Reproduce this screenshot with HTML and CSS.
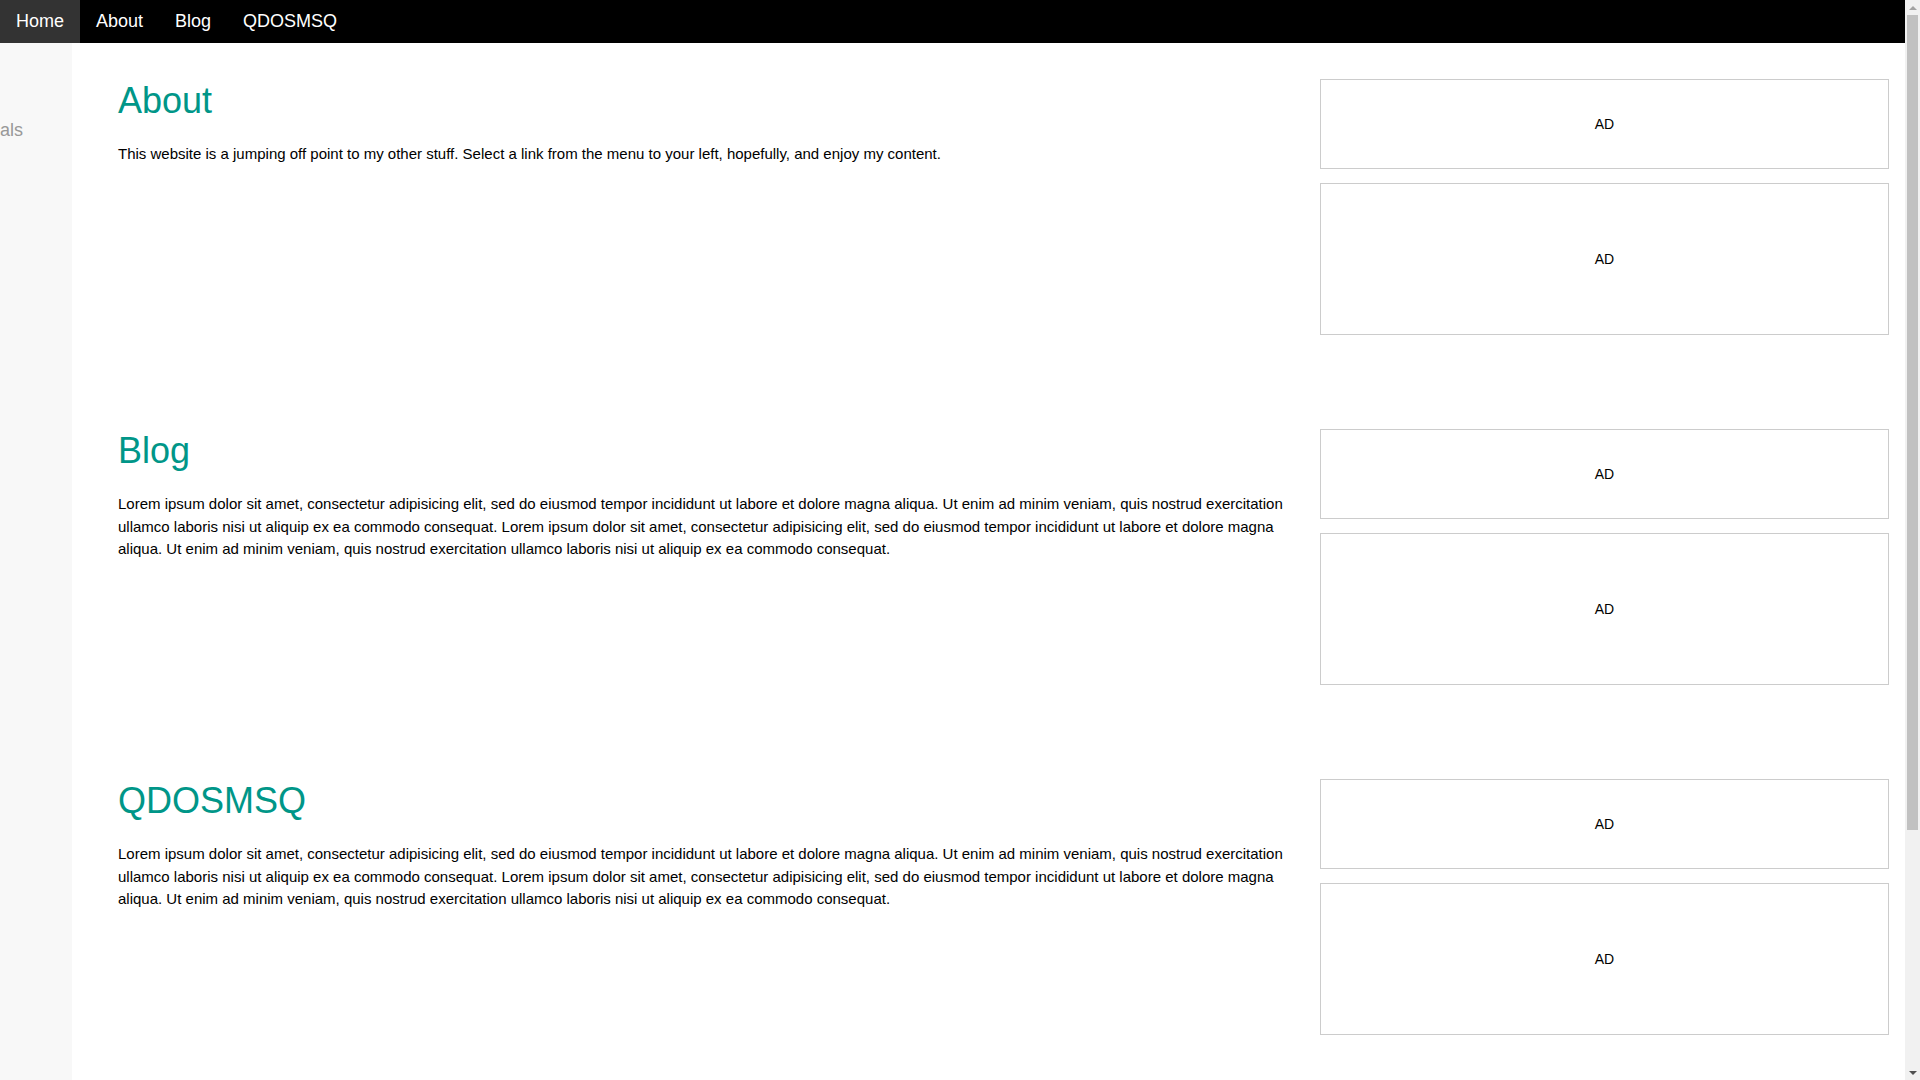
FILE: index.html
```html
<!DOCTYPE html>
<html lang="en">
<head>
<meta charset="utf-8">
<title>Home</title>
<link rel="stylesheet" href="styles.css">
</head>
<body>
<nav class="topnav">
  <a class="nav-link active" href="#">Home</a>
  <a class="nav-link" href="#about">About</a>
  <a class="nav-link" href="#blog">Blog</a>
  <a class="nav-link" href="#qdosmsq">QDOSMSQ</a>
</nav>
<div class="layout">
  <aside class="sidebar">
    <span class="side-text">als</span>
  </aside>
  <main class="main">
    <section class="section" id="about">
      <div class="text-col">
        <h1 class="title">About</h1>
        <p class="body-text">This website is a jumping off point to my other stuff. Select a link from the menu to your left, hopefully, and enjoy my content.</p>
      </div>
      <div class="ad-col">
        <div class="ad ad-short">AD</div>
        <div class="ad ad-tall">AD</div>
      </div>
    </section>
    <section class="section" id="blog">
      <div class="text-col">
        <h1 class="title">Blog</h1>
        <p class="body-text">Lorem ipsum dolor sit amet, consectetur adipisicing elit, sed do eiusmod tempor incididunt ut labore et dolore magna aliqua. Ut enim ad minim veniam, quis nostrud exercitation ullamco laboris nisi ut aliquip ex ea commodo consequat. Lorem ipsum dolor sit amet, consectetur adipisicing elit, sed do eiusmod tempor incididunt ut labore et dolore magna aliqua. Ut enim ad minim veniam, quis nostrud exercitation ullamco laboris nisi ut aliquip ex ea commodo consequat.</p>
      </div>
      <div class="ad-col">
        <div class="ad ad-short">AD</div>
        <div class="ad ad-tall">AD</div>
      </div>
    </section>
    <section class="section" id="qdosmsq">
      <div class="text-col">
        <h1 class="title">QDOSMSQ</h1>
        <p class="body-text">Lorem ipsum dolor sit amet, consectetur adipisicing elit, sed do eiusmod tempor incididunt ut labore et dolore magna aliqua. Ut enim ad minim veniam, quis nostrud exercitation ullamco laboris nisi ut aliquip ex ea commodo consequat. Lorem ipsum dolor sit amet, consectetur adipisicing elit, sed do eiusmod tempor incididunt ut labore et dolore magna aliqua. Ut enim ad minim veniam, quis nostrud exercitation ullamco laboris nisi ut aliquip ex ea commodo consequat.</p>
      </div>
      <div class="ad-col">
        <div class="ad ad-short">AD</div>
        <div class="ad ad-tall">AD</div>
      </div>
    </section>
  </main>
</div>
<div class="scrollbar" aria-hidden="true">
  <span class="sb-arrow sb-up"></span>
  <span class="sb-track"><span class="sb-thumb"></span></span>
  <span class="sb-arrow sb-down"></span>
</div>
</body>
</html>
```
FILE: styles.css
```css
* { box-sizing: border-box; }

html, body {
  margin: 0;
  padding: 0;
}

body {
  font-family: "Liberation Sans", Arial, sans-serif;
  font-size: 15px;
  line-height: 1.5;
  color: #000;
  background: #fff;
}

.topnav {
  display: flex;
  background: #000;
  height: 43px;
}

.nav-link {
  display: block;
  padding: 11px 16px;
  font-size: 18px;
  line-height: 21px;
  color: #fff;
  text-decoration: none;
}

.nav-link.active {
  background: #333;
}

.layout {
  display: flex;
  min-height: 1348px;
}

.sidebar {
  width: 72px;
  flex: 0 0 72px;
  background: #f8f8f8;
  padding-top: 77px;
}

.side-text {
  display: block;
  font-size: 18px;
  line-height: 21px;
  color: #999;
}

.main {
  flex: 1;
  padding: 31px 31px 267px 46px;
}

.section {
  display: flex;
  gap: 20px;
  height: 350px;
}

.text-col {
  flex: 1;
  min-width: 0;
}

.title {
  margin: 0;
  font-size: 36px;
  line-height: 54px;
  font-weight: normal;
  color: #009688;
}

.body-text {
  margin: 15px 0 0;
  font-size: 15px;
  line-height: 22.5px;
}

.ad-col {
  width: 569px;
  flex: 0 0 569px;
  padding-top: 5px;
  display: flex;
  flex-direction: column;
  gap: 14px;
}

.ad {
  border: 1px solid #ccc;
  display: flex;
  align-items: center;
  justify-content: center;
  font-size: 14px;
  line-height: 16px;
}

.ad-short { height: 90px; }
.ad-tall { height: 152px; }

/* drawn page scrollbar, overlaid on the right edge */
.scrollbar {
  position: fixed;
  top: 0;
  right: 0;
  width: 15px;
  height: 100vh;
  background: #f1f1f1;
  display: flex;
  flex-direction: column;
  align-items: center;
}

.sb-arrow {
  flex: 0 0 15px;
  width: 15px;
  display: flex;
  align-items: center;
  justify-content: center;
}

.sb-up::before {
  content: "";
  border-left: 4px solid transparent;
  border-right: 4px solid transparent;
  border-bottom: 4px solid #a3a3a3;
}

.sb-down::before {
  content: "";
  border-left: 4px solid transparent;
  border-right: 4px solid transparent;
  border-top: 4px solid #505050;
}

.sb-track {
  flex: 1;
  width: 15px;
  padding: 0 2px;
  display: flex;
  flex-direction: column;
}

.sb-thumb {
  height: 815px;
  background: #c1c1c1;
}
```
